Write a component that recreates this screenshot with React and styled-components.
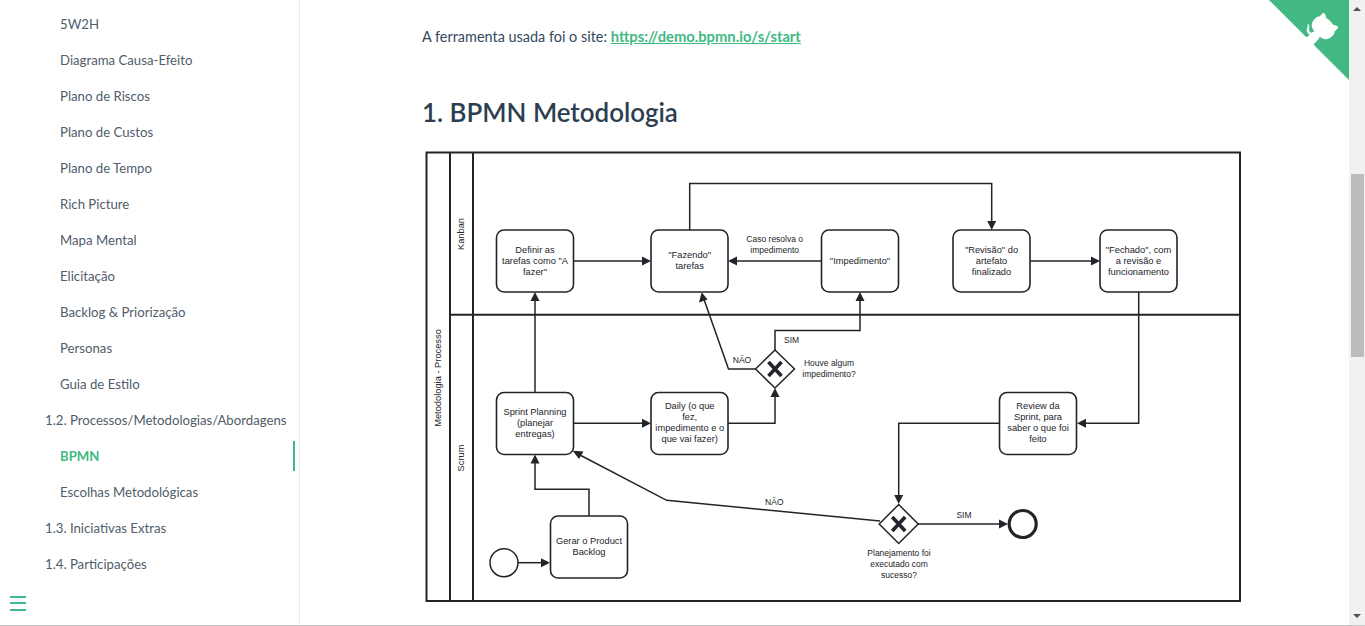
import React from "react";
import styled, { createGlobalStyle } from "styled-components";

const Global = createGlobalStyle`
  html, body { margin: 0; padding: 0; height: 100%; overflow: hidden; background: #fff; }
`;

const Page = styled.div`
  width: 1365px;
  height: 626px;
  display: flex;
  flex-direction: column;
  overflow: hidden;
  font-family: "Lato", "Noto Sans", sans-serif;
`;
const Viewport = styled.div`
  position: relative;
  flex: 1;
  min-height: 0;
  display: flex;
`;
const BottomEdge = styled.div`
  height: 1px;
  background: #c4c4c4;
`;
const Sidebar = styled.aside`
  width: 300px;
  box-sizing: border-box;
  border-right: 1px solid #eaeaea;
  padding: 6px 4px 0 0;
  overflow: hidden;
`;
const NavList = styled.ul`
  list-style: none;
  margin: 0;
  padding: 0;
`;
const NavItem = styled.li`
  height: 30px;
  margin: 3px 0 6px;
  line-height: 30px;
  box-sizing: border-box;
  padding-left: ${(p) => (p.$level === 1 ? 45 : 60)}px;
  font-size: 13.2px;
  white-space: nowrap;
  color: ${(p) => (p.$active ? "#42b983" : "#505d6b")};
  font-weight: ${(p) => (p.$active ? 700 : 400)};
  border-right: 2px solid ${(p) => (p.$active ? "#42b983" : "transparent")};
`;
const MenuToggle = styled.div`
  position: absolute;
  left: 10px;
  top: 596px;
  width: 16px;
  display: flex;
  flex-direction: column;
  gap: 4.4px;
`;
const MenuBar = styled.span`
  display: block;
  height: 2px;
  background: #42b983;
`;
const Main = styled.main`
  flex: 1;
  min-width: 0;
  padding: 24px 0 0 122px;
  overflow: hidden;
`;
const Paragraph = styled.p`
  margin: 0;
  font-size: 14.45px;
  line-height: 24px;
  color: #34495e;
`;
const Link = styled.a`
  color: #42b983;
  font-size: 14.75px;
  font-weight: 700;
  text-decoration: underline;
`;
const Heading = styled.h2`
  margin: 45px 0 0;
  font-size: 25.9px;
  line-height: 36px;
  font-weight: 600;
  color: #2c3e50;
`;
const Figure = styled.svg`
  display: block;
  margin: 20px 0 0 2px;
`;
const Line = styled.path`
  fill: none;
  stroke: #22242a;
  stroke-width: ${(p) => p.$w || 1.5}px;
`;
const Task = styled.rect`
  fill: #fff;
  stroke: #22242a;
  stroke-width: 1.6px;
`;
const Head = styled.polygon`
  fill: #22242a;
`;
const Ring = styled.circle`
  fill: #fff;
  stroke: #22242a;
  stroke-width: ${(p) => p.$w}px;
`;
const Diamond = styled.polygon`
  fill: #fff;
  stroke: #22242a;
  stroke-width: 1.5px;
`;
const Cross = styled.path`
  fill: none;
  stroke: #22242a;
  stroke-width: 3.6px;
`;
const Label = styled.text`
  font-family: "Liberation Sans", Arial, sans-serif;
  font-size: ${(p) => (p.$small ? 8.5 : 9.3)}px;
  fill: #22242a;
  text-anchor: ${(p) => p.$anchor || "middle"};
`;

const Scrollbar = styled.div`
  width: 16px;
  background: #f1f1f1;
  display: flex;
  flex-direction: column;
  align-items: center;
`;
const ScrollArrow = styled.svg`
  display: block;
  margin: ${(p) => p.$margin};
`;
const Thumb = styled.div`
  width: 13px;
  height: 183px;
  margin: 163px 0 0 1px;
  background: #bcbcbc;
`;
const Corner = styled.a`
  position: absolute;
  top: 0;
  right: 16px;
  display: block;
  line-height: 0;
`;

const nav = [
  [2, "5W2H"],
  [2, "Diagrama Causa-Efeito"],
  [2, "Plano de Riscos"],
  [2, "Plano de Custos"],
  [2, "Plano de Tempo"],
  [2, "Rich Picture"],
  [2, "Mapa Mental"],
  [2, "Elicitação"],
  [2, "Backlog & Priorização"],
  [2, "Personas"],
  [2, "Guia de Estilo"],
  [1, "1.2. Processos/Metodologias/Abordagens"],
  [2, "BPMN", true],
  [2, "Escolhas Metodológicas"],
  [1, "1.3. Iniciativas Extras"],
  [1, "1.4. Participações"],
];

const tasks = [
  [496.5, 230, 77],
  [651, 230, 77],
  [821.5, 230, 77],
  [953, 230, 77],
  [1100, 230, 77],
  [496.5, 392.5, 77],
  [651, 392.5, 77],
  [999.5, 392.5, 77],
  [550.5, 516, 77],
];

const lines = [
  "M574 261H645",
  "M821 261H734",
  "M689.7 230V183.5H991.7V224",
  "M1030 261H1094",
  "M535 392V298",
  "M756 369H728.5L703.5 298",
  "M775 350V330.5H860V298",
  "M574 423.3H645",
  "M728 423.3H775V394",
  "M1138.7 292V423.3H1083",
  "M999 423.3H898.7V498",
  "M880 521L666.7 500.3L578 454",
  "M589 516V489.3H535V460",
  "M518 562.7H544",
  "M918 524H1002",
];

const heads = [
  "651,261 642,256.5 642,265.5",
  "728,261 737,256.5 737,265.5",
  "991.7,230 987.2,221 996.2,221",
  "1100,261 1091,256.5 1091,265.5",
  "535,292 530.5,301 539.5,301",
  "701.7,292.3 699,302.5 707.5,299.5",
  "860,292 855.5,301 864.5,301",
  "651,423.3 642,418.8 642,427.8",
  "775,388 770.5,397 779.5,397",
  "1077,423.3 1086,418.8 1086,427.8",
  "898.7,504 894.2,495 903.2,495",
  "572.7,450.7 583.5,451.5 579,459",
  "535,454.5 530.5,463.5 539.5,463.5",
  "550,562.7 541,558.2 541,567.2",
  "1008,524 999,519.5 999,528.5",
];

const labels = [
  [535, 250, ["Definir as", 'tarefas como "A', 'fazer"']],
  [689.7, 254.7, ['"Fazendo"', "tarefas"]],
  [774.7, 239, ["Caso resolva o", "impedimento"], true],
  [860, 261, ['"Impedimento"']],
  [991.5, 250, ['"Revisão" do', "artefato", "finalizado"]],
  [1138.5, 250, ['"Fechado", com', "a revisão e", "funcionamento"]],
  [742, 359.7, ["NÃO"], true],
  [829, 362.5, ["Houve algum", "impedimento?"], true],
  [535, 412, ["Sprint Planning", "(planejar", "entregas)"]],
  [689.7, 406, ["Daily (o que", "fez,", "impedimento e o", "que vai fazer)"]],
  [1038, 406, ["Review da", "Sprint, para", "saber o que foi", "feito"]],
  [774.3, 501.7, ["NÃO"], true],
  [964, 514.3, ["SIM"], true],
  [899, 553, ["Planejamento foi", "executado com", "sucesso?"], true],
  [589, 541, ["Gerar o Product", "Backlog"]],
];

const Block = ({ x, y, text, small }) => (
  <>
    {text.map((t, i) => (
      <Label key={i} $small={small} x={x} y={y + i * 11 + 3.4}>
        {t}
      </Label>
    ))}
  </>
);

const Diagram = () => (
  <Figure width="820" height="455" viewBox="424 150 820 455" role="img">
    <Line $w={2} d="M426.5 152.5H1240V601H426.5Z" />
    <Line $w={2} d="M450 152.5V601M473 152.5V601M450 314.7H1240" />
    {lines.map((d, i) => (
      <Line key={i} d={d} />
    ))}
    {tasks.map(([x, y, w], i) => (
      <Task key={i} x={x} y={y} width={w} height={62} rx={7.5} />
    ))}
    {heads.map((p, i) => (
      <Head key={i} points={p} />
    ))}
    <Ring cx={504} cy={562.7} r={14} $w={1.5} />
    <Ring cx={1022.7} cy={524} r={13.5} $w={3.2} />
    <Diamond points="775,350 794.5,369 775,388 755.5,369" />
    <Cross d="M768.5 362L781.5 376M781.5 362L768.5 376" />
    <Diamond points="898.7,504.5 918.2,524 898.7,543.5 879.2,524" />
    <Cross d="M892.2 517L905.2 531M905.2 517L892.2 531" />
    <Label $small $anchor="start" x={784} y={343}>
      SIM
    </Label>
    {labels.map(([x, y, text, small], i) => (
      <Block key={i} x={x} y={y} text={text} small={small} />
    ))}
    <Label transform="translate(464 234) rotate(-90)">Kanban</Label>
    <Label transform="translate(464 458) rotate(-90)">Scrum</Label>
    <Label transform="translate(441 378) rotate(-90)">Metodologia - Processo</Label>
  </Figure>
);

export default function App() {
  return (
    <Page>
      <Global />
      <Viewport>
        <Sidebar>
          <NavList>
            {nav.map(([level, text, active]) => (
              <NavItem key={text} $level={level} $active={active}>
                {text}
              </NavItem>
            ))}
          </NavList>
        </Sidebar>
        <MenuToggle>
          <MenuBar />
          <MenuBar />
          <MenuBar />
        </MenuToggle>
        <Main>
          <Paragraph>
            A ferramenta usada foi o site: <Link href="#start">https://demo.bpmn.io/s/start</Link>
          </Paragraph>
          <Heading>1. BPMN Metodologia</Heading>
          <Diagram />
        </Main>
        <Corner href="#repo" aria-label="View source">
          <svg width="80" height="80" viewBox="0 0 250 250">
            <path fill="#42b983" d="M0,0 L115,115 L130,115 L142,142 L250,250 L250,0 Z" />
            <path
              fill="#fff"
              d="M128.3,109.0 C113.8,99.7 119.0,89.6 119.0,89.6 C122.0,82.7 120.5,78.6 120.5,78.6 C119.2,72.0 123.4,76.3 123.4,76.3 C127.3,80.9 125.5,87.3 125.5,87.3 C122.9,97.6 130.6,101.9 134.4,103.2"
            />
            <path
              fill="#fff"
              d="M115.0,115.0 C114.9,115.1 118.7,116.5 119.8,115.4 L133.7,101.6 C136.9,99.2 139.9,98.4 142.2,98.6 C133.8,88.0 127.5,74.4 143.8,58.0 C148.5,53.4 154.0,51.2 159.7,51.0 C160.3,49.4 163.2,43.6 171.4,40.1 C171.4,40.1 176.1,42.5 178.8,56.2 C183.1,58.6 187.2,61.8 190.9,65.4 C194.5,69.0 197.7,73.2 200.1,77.6 C213.8,80.2 216.3,84.9 216.3,84.9 C212.7,93.1 206.9,96.0 205.4,96.6 C205.1,102.4 203.0,107.8 198.3,112.5 C181.9,128.9 168.3,122.5 157.7,114.1 C157.9,116.9 156.7,120.9 152.7,124.9 L141.0,136.5 C139.8,137.7 141.6,141.9 141.8,141.8 Z"
            />
          </svg>
        </Corner>
        <Scrollbar>
          <ScrollArrow $margin="7px 0 0" width="8" height="4" viewBox="0 0 8 4">
            <path fill="#505050" d="M4 0L8 4H0Z" />
          </ScrollArrow>
          <Thumb />
          <ScrollArrow $margin="auto 0 7px" width="8" height="4" viewBox="0 0 8 4">
            <path fill="#505050" d="M0 0H8L4 4Z" />
          </ScrollArrow>
        </Scrollbar>
      </Viewport>
      <BottomEdge />
    </Page>
  );
}
